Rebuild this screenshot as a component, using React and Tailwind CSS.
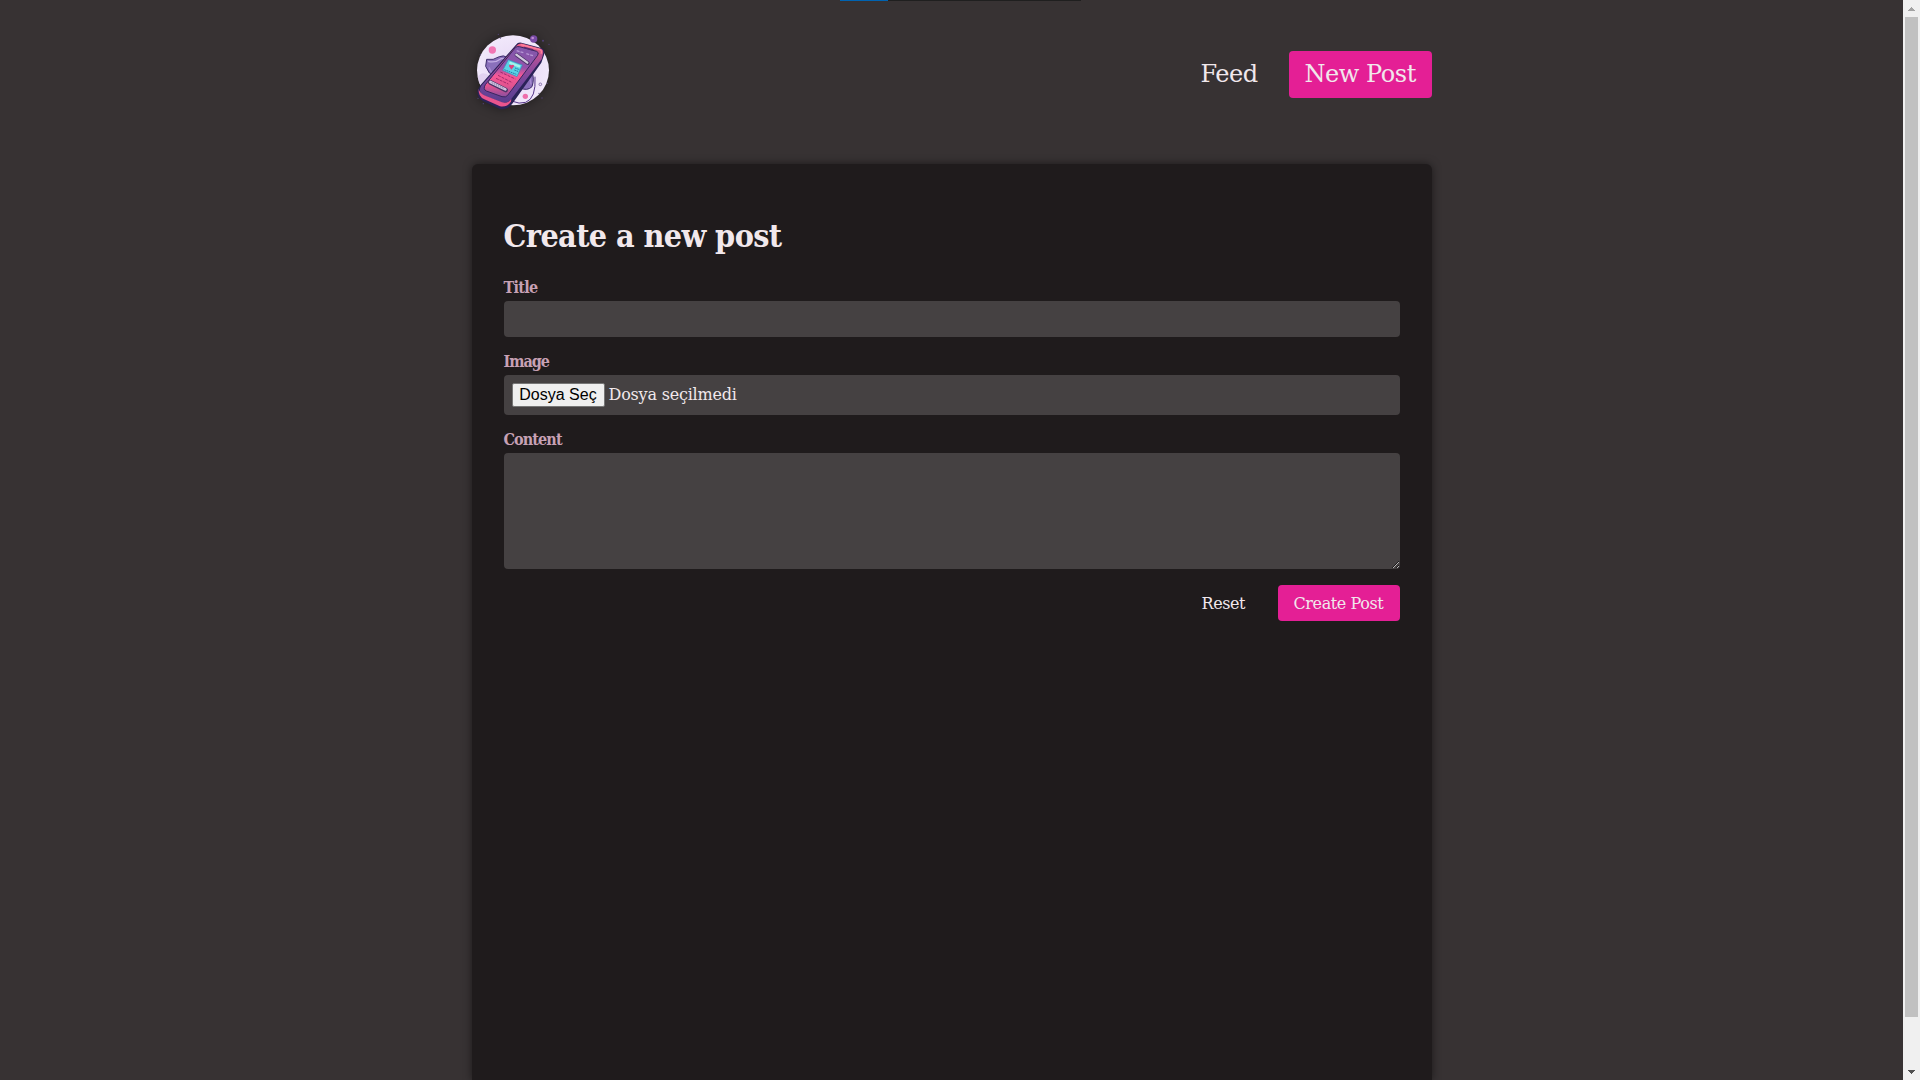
const serif = "font-['DejaVu_Serif',serif]";
const condensed = "font-['DejaVu_Serif_Condensed','DejaVu_Serif',serif] [font-stretch:condensed]";

function Logo() {
  return (
    <svg viewBox="36 36 240 240" className="block h-20 w-20 overflow-visible drop-shadow-[0_0_6px_rgba(0,0,0,0.45)]">
      <defs>
        <linearGradient id="screen" x1="0" y1="0" x2="0" y2="1">
          <stop offset="0" stopColor="#8058ab" />
          <stop offset="0.42" stopColor="#9452aa" />
          <stop offset="0.58" stopColor="#f65896" />
          <stop offset="0.78" stopColor="#e2538f" />
          <stop offset="1" stopColor="#8a4f9f" />
        </linearGradient>
        <linearGradient id="edge" x1="0" y1="0" x2="0" y2="1">
          <stop offset="0" stopColor="#f25f84" />
          <stop offset="0.35" stopColor="#9c4c9c" />
          <stop offset="0.7" stopColor="#6f469c" />
          <stop offset="1" stopColor="#5a3c8c" />
        </linearGradient>
        <radialGradient id="disc">
          <stop offset="0" stopColor="#e5d5f4" />
          <stop offset="1" stopColor="#f1e8fb" />
        </radialGradient>
      </defs>
      <ellipse cx="159" cy="151" rx="108" ry="105" fill="url(#disc)" />
      <path d="M53 170Q67 150 90 168L112 220 93 235Q57 205 53 170Z" fill="#e2d2f1" />
      <path d="M80 118Q100 122 118 110Q132 104 142 113L216 158Q224 176 216 200Q202 214 180 204L108 177Q84 160 77 139Z" fill="#8a70bb" stroke="#3d2d6b" strokeWidth="3" />
      <path d="M84 124Q105 130 123 116L135 116" fill="none" stroke="#c3aee4" strokeWidth="4" />
      <path d="M87 142L99 166M208 165L213 193" fill="none" stroke="#a58bd0" strokeWidth="4" />
      <path d="M225 170Q229 235 197 247Q177 253 158 244" fill="none" stroke="#54358a" strokeWidth="3" />
      <circle cx="97" cy="90" r="11" fill="#f176b4" />
      <circle cx="196" cy="229" r="8" fill="#ee6eab" />
      <circle cx="221" cy="57" r="11" fill="#774aa5" />
      <circle cx="218" cy="54" r="4" fill="#c08ad4" />
      <circle cx="241" cy="193" r="4" fill="none" stroke="#62498f" strokeWidth="2" />
      <path d="M168 74Q174 66 184 68L244 84Q256 88 252 105L244 128 158 250Q143 271 120 267L69 243Q50 233 53 211L61 196Z" fill="#2a2258" />
      <path d="M171 76Q177 69 188 71L243 86Q252 90 249 101L245 118 151 241Q143 250 127 248L70 226Q53 214 64 197Z" fill="url(#edge)" />
      <path d="M56 207Q59 221 78 228L126 247Q145 251 154 237L153 245Q140 263 120 259L73 238Q54 229 56 207Z" fill="#ea548e" />
      <path d="M178 80L230 94Q238 97 233 106L143 226Q138 233 126 230L79 213Q68 208 76 194L166 83Q171 78 178 80Z" fill="url(#screen)" stroke="#38265f" strokeWidth="3" />
      <path d="M182 74L240 89Q247 92 243 101" fill="none" stroke="#ff829b" strokeWidth="4" />
      <path d="M192 82L220 90" stroke="#552b70" strokeWidth="4" />
      <path d="M170 92L190 98M199 101L219 107" stroke="#b797d5" strokeWidth="4" strokeDasharray="9 3" />
      <path d="M170 105L203 129" stroke="#4a3468" strokeWidth="12" strokeLinecap="round" />
      <path d="M169 104L202 128" stroke="#d2c9df" strokeWidth="7" strokeLinecap="round" />
      <path d="M145 119L187 135 171 170 128 151Z" fill="#5ad3e5" stroke="#3f83b4" strokeWidth="2" />
      <path d="M148 128L180 140" stroke="#a4f3ec" strokeWidth="7" />
      <path d="M154 149L147 139Q147 132 154 136Q159 132 163 138Z" fill="#de427f" />
      <path d="M133 149L169 163M165 144L179 149M163 150L176 155" stroke="#277ba7" strokeWidth="3" strokeDasharray="5 2" />
      <path d="M121 156L166 177M114 166L157 188M108 175L145 192" stroke="#a32c6c" strokeWidth="3" strokeDasharray="9 3" />
      <path d="M91 187L137 210" stroke="#4a3468" strokeWidth="14" strokeLinecap="round" />
      <path d="M91 186L136 208" stroke="#d0c4df" strokeWidth="8" strokeLinecap="round" />
      <path d="M95 188L131 205" stroke="#7a6895" strokeWidth="2.5" strokeDasharray="4 3" />
      <g fill="#514078">
        <circle cx="115" cy="43" r="2" />
        <circle cx="121" cy="54" r="2" />
        <circle cx="249" cy="62" r="3" />
        <circle cx="267" cy="73" r="2" />
        <circle cx="61" cy="104" r="2" />
        <circle cx="262" cy="190" r="2" />
        <circle cx="237" cy="220" r="2" />
        <circle cx="246" cy="234" r="2" />
        <circle cx="54" cy="235" r="2" />
        <circle cx="70" cy="251" r="2" />
      </g>
    </svg>
  );
}

function Scrollbar() {
  return (
    <div className="flex h-full w-[17px] shrink-0 flex-col items-center bg-[#f0f0f0]">
      <div className="flex h-[17px] items-center">
        <svg width="7" height="4" viewBox="0 0 7 4" className="block" shapeRendering="crispEdges">
          <path d="M3 0h1v1h1v1h1v1h1v1H0V3h1V2h1V1h1z" fill="#a3a3a3" />
        </svg>
      </div>
      <div className="h-[1000px] w-[13px] bg-[#c1c1c1]" />
      <div className="mt-auto flex h-[17px] items-center">
        <svg width="7" height="4" viewBox="0 0 7 4" className="block" shapeRendering="crispEdges">
          <path d="M0 0h7v1H6v1H5v1H4v1H3V3H2V2H1V1H0z" fill="#505050" />
        </svg>
      </div>
    </div>
  );
}

function Label({ children, className }) {
  return (
    <label className={`block h-[23px] text-base leading-[23px] font-bold text-[#c7a1b4] ${condensed} ${className}`}>
      {children}
    </label>
  );
}

export default function App() {
  return (
    <div className={`relative flex h-[1080px] w-[1920px] overflow-hidden bg-[#373233] text-[#f1e8ec] ${serif}`}>
      <div className="absolute top-0 left-[840px] flex h-px w-[241px] bg-[#1f1f1f]">
        <div className="w-12 bg-[#0063b1]" />
      </div>
      <div className="flex h-full flex-1 justify-center">
        <div className="flex w-[960px] flex-col">
          <header className="flex h-[164px] items-start justify-between pt-8">
            <Logo />
            <nav className="mt-[19px] flex text-2xl leading-[47px]">
              <a className="mr-8 w-[56px] whitespace-nowrap tracking-[-0.5px]">Feed</a>
              <a className="w-[143px] rounded bg-[#e41f95] pl-4 whitespace-nowrap tracking-[-0.45px]">New Post</a>
            </nav>
          </header>
          <main className="flex-1 rounded-t-md bg-[#1f1b1c] px-8 pt-[52px] shadow-[0_0_8px_rgba(0,0,0,0.5)]">
            <h1 className={`h-10 text-[32px] leading-[41px] font-bold tracking-[-0.6px] whitespace-nowrap ${condensed}`}>
              Create a new post
            </h1>
            <form>
              <Label className="mt-5 tracking-[-0.7px]">Title</Label>
              <div className="mt-0.5 h-9 rounded bg-[#454142]" />
              <Label className="mt-[13px] tracking-[-1px]">Image</Label>
              <div className="mt-[2px] flex h-10 items-center rounded bg-[#454142] pl-2 text-base">
                <span className="flex h-6 w-[93px] items-center justify-center rounded-[2px] border border-[#767676] bg-[#efefef] font-['Liberation_Sans',sans-serif] text-black">
                  Dosya Seç
                </span>
                <span className="ml-1 tracking-[-0.2px] whitespace-nowrap">Dosya seçilmedi</span>
              </div>
              <Label className="mt-[13px] tracking-[-0.9px]">Content</Label>
              <textarea className="mt-[2px] block h-[116px] w-full resize-y rounded bg-[#454142]" />
              <div className="mt-4 flex h-9 justify-end text-base leading-[37px] tracking-[-0.4px]">
                <span className="mr-8 w-[44px] whitespace-nowrap">Reset</span>
                <span className="w-[122px] rounded bg-[#e41f95] pl-4 whitespace-nowrap">Create Post</span>
              </div>
            </form>
          </main>
        </div>
      </div>
      <Scrollbar />
    </div>
  );
}
